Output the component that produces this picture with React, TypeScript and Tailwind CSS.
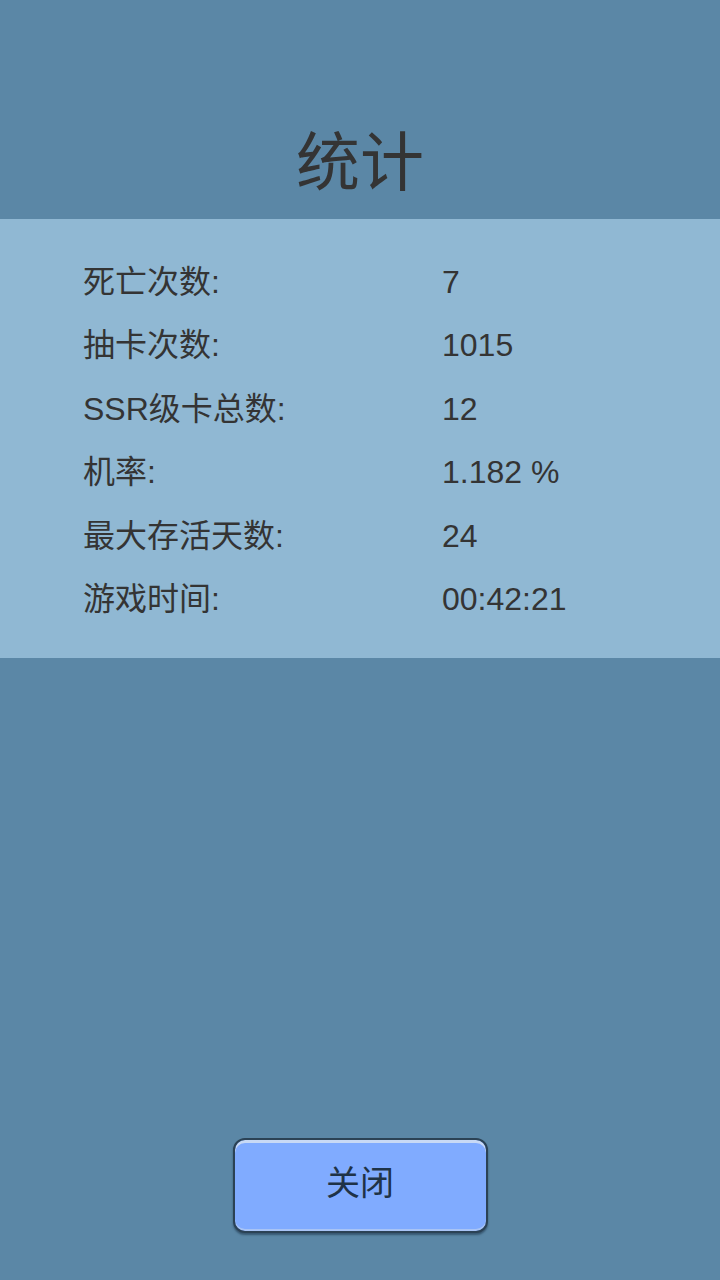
import React from "react";

const STATS: { label: string; value: string }[] = [
    { label: "死亡次数:", value: "7" },
    { label: "抽卡次数:", value: "1015" },
    { label: "SSR级卡总数:", value: "12" },
    { label: "机率:", value: "1.182 %" },
    { label: "最大存活天数:", value: "24" },
    { label: "游戏时间:", value: "00:42:21" },
];

const FONT = {
    fontFamily: '"Liberation Sans", "Noto Sans CJK SC", sans-serif',
};

export default function App() {
    return (
        <div
            className="flex h-[1280px] w-[720px] flex-col bg-[#5b87a6] text-[#343434]"
            style={FONT}
        >
            <header className="flex h-[219px] items-end justify-center pb-[24px]">
                <h1 className="text-[64px] leading-none font-normal text-[#343434]">
                    统计
                </h1>
            </header>

            <section className="flex h-[439px] flex-col bg-[#90b8d3] pt-[31px]">
                {STATS.map((stat) => (
                    <div
                        key={stat.label}
                        className="flex h-[63.5px] items-center text-[32px] leading-none"
                    >
                        <span className="w-[442px] shrink-0 pl-[83px]">
                            {stat.label}
                        </span>
                        <span>{stat.value}</span>
                    </div>
                ))}
            </section>

            <div className="flex flex-1 items-end justify-center pb-[47px]">
                <button
                    type="button"
                    className="flex h-[95px] w-[255px] items-center justify-center rounded-[12px] border-2 border-[#2b4255] bg-[#80abff] pb-[4px] text-[34px] text-[#1f3347] shadow-[inset_0_3px_0_#c8d9f5,inset_0_-2px_0_#a9c4f5,0_2px_2px_rgba(20,40,60,0.5)]"
                >
                    关闭
                </button>
            </div>
        </div>
    );
}
